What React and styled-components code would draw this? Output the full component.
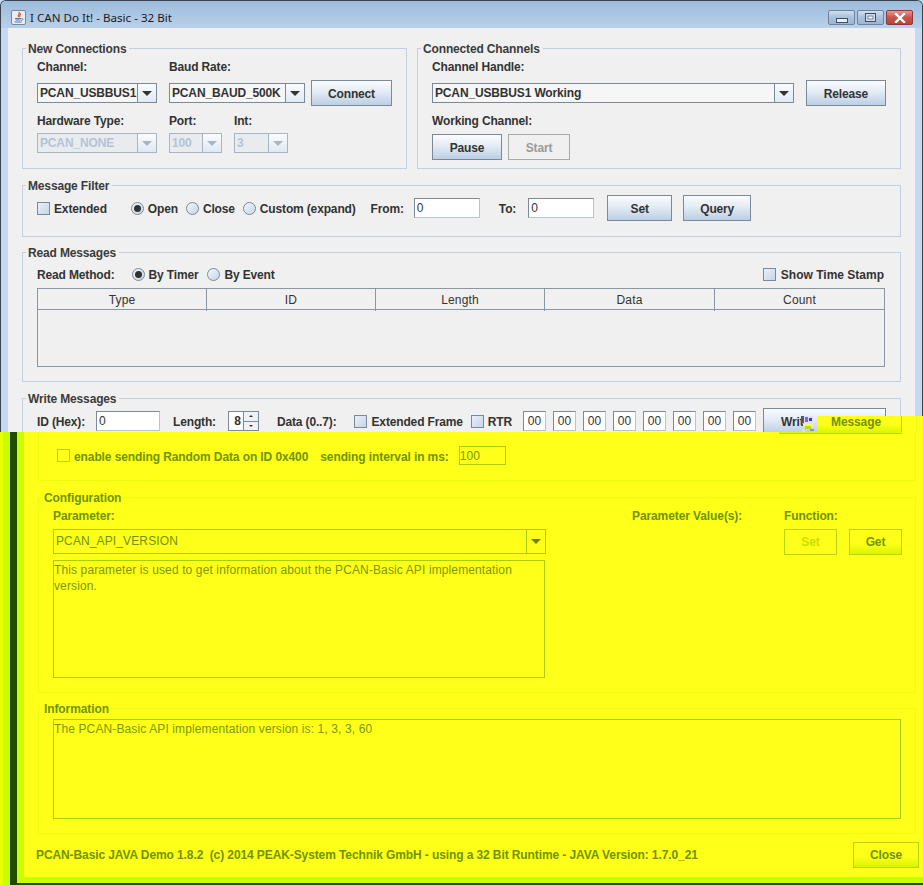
import React from 'react';
import styled, {createGlobalStyle, css} from 'styled-components';

const GlobalStyle = createGlobalStyle`
  html, body {
    margin: 0;
    padding: 0;
    background: #c5d9f1;
  }
  * {
    box-sizing: border-box;
  }
`;

const Page = styled.div`
  position: relative;
  width: 923px;
  height: 885px;
  overflow: hidden;
  font-family: "Liberation Sans", Arial, sans-serif;
  font-size: 12px;
  color: #333;
`;

const TopWindow = styled.div`
  height: 432px;
  background: #c5d9f1;
  border: 1px solid #39424d;
  border-bottom: 0;
  border-radius: 6px 6px 0 0;
  padding: 0 7px;
  overflow: hidden;
`;

const TitleBar = styled.div`
  height: 27px;
  margin: 0 -7px;
  padding: 6px 7px 0 10px;
  display: flex;
  align-items: center;
  gap: 4px;
  background: linear-gradient(180deg, #9dbcdd 0%, #b8d0ea 100%);
  font-family: "Noto Sans", "Liberation Sans", sans-serif;
  font-size: 11.6px;
  color: #1a1a1a;
`;

const TitleText = styled.span`
  flex: 1;
`;

const CaptionButtons = styled.div`
  display: flex;
  gap: 2px;
  margin-right: 2px;
`;

const CaptionButton = styled.div`
  width: 27px;
  height: 15px;
  display: flex;
  align-items: center;
  justify-content: center;
  border: 1px solid ${props => (props.$close ? '#8b3a38' : '#6f8299')};
  border-radius: 2px;
  background: ${props => (props.$close
    ? 'linear-gradient(180deg, #e09a90 0%, #c9554a 50%, #b8443a 100%)'
    : 'linear-gradient(180deg, #cfdff0 0%, #a9c1da 50%, #9db6d1 100%)')};
`;

const Content = styled.div`
  height: 404px;
  background: #f0f0f0;
  padding: 13px 14px 0;
`;

const GroupRow = styled.div`
  display: flex;
  gap: 10px;
`;

const Group = styled.fieldset`
  margin: 0 0 ${props => props.$bottom || '0'};
  padding: 0 14px;
  min-width: 0;
  flex: ${props => props.$flex || 'none'};
  width: ${props => props.$width || 'auto'};
  height: ${props => props.$height};
  border: 1px solid #c2cfdf;
  border-radius: 0;
`;

const Legend = styled.legend`
  margin-left: -11px;
  padding: 0 3px 0 2px;
  font-weight: bold;
  letter-spacing: -0.15px;
  line-height: 14px;
  color: #3b3b3b;
  transform: translateY(1px);
`;

const FieldLabel = styled.label`
  display: block;
  flex: none;
  width: ${props => props.$width || 'auto'};
  font-weight: bold;
  letter-spacing: -0.15px;
  line-height: 14px;
  white-space: nowrap;
`;

const Combo = styled.div`
  display: flex;
  align-items: stretch;
  flex: none;
  width: ${props => props.$width};
  height: 20px;
  margin-left: ${props => props.$left || '0'};
  border: 1px solid ${props => (props.$disabled ? '#a9b5c3' : '#7a8a99')};
  background: ${props => (props.$disabled ? '#e9ecef' : '#f6f6f6')};
`;

const ComboValue = styled.div`
  flex: 1;
  padding-left: 2px;
  line-height: 19px;
  font-weight: bold;
  letter-spacing: -0.15px;
  white-space: nowrap;
  overflow: hidden;
  color: ${props => (props.$disabled ? '#b4c3d6' : '#333')};
`;

const ComboArrow = styled.div`
  width: 19px;
  flex: none;
  display: flex;
  align-items: center;
  justify-content: center;
  border-left: 1px solid ${props => (props.$disabled ? '#a9b5c3' : '#7a8a99')};
  background: linear-gradient(180deg, #fbfcfe 0%, #dfe8f3 100%);
  &::after {
    content: "";
    border-left: 5px solid transparent;
    border-right: 5px solid transparent;
    border-top: 5px solid ${props => (props.$disabled ? '#a9b5c3' : '#333')};
  }
`;

const Button = styled.button`
  flex: none;
  width: ${props => props.$width};
  height: 26px;
  margin: 0 0 0 ${props => props.$left || '0'};
  padding: 2px 0 0;
  font: bold 12px "Liberation Sans", Arial, sans-serif;
  letter-spacing: -0.15px;
  color: ${props => (props.disabled ? '#9a9a9a' : '#333')};
  border: 1px solid ${props => (props.disabled ? '#a9a9a9' : '#7a8a99')};
  background: ${props => (props.disabled
    ? '#f0f0f0'
    : 'linear-gradient(180deg, #fbfcfe 0%, #e3ebf5 45%, #bccfe5 100%)')};
`;

const WriteButton = styled(Button)`
  text-align: left;
  padding-left: 17px;
`;

const Spacer = styled.div`
  flex: 1;
`;

const Row = styled.div`
  display: flex;
  align-items: ${props => props.$align || 'center'};
  height: ${props => props.$height || 'auto'};
  margin-top: ${props => props.$top || '0'};
  gap: ${props => props.$gap || '0'};
`;

const Check = styled.span`
  display: inline-block;
  flex: none;
  width: 13px;
  height: 13px;
  margin-left: ${props => props.$left || '0'};
  margin-right: ${props => props.$right || '4px'};
  border: 1px solid #7a8a99;
  background: linear-gradient(135deg, #e9eff7 0%, #c5d5e8 100%);
`;

const Radio = styled.span`
  position: relative;
  display: inline-block;
  flex: none;
  width: 13px;
  height: 13px;
  margin-left: ${props => props.$left || '0'};
  margin-right: 4px;
  border: 1px solid #7a8a99;
  border-radius: 50%;
  background: linear-gradient(135deg, #f4f7fb 0%, #c5d5e8 100%);
  ${props => props.$on && css`
    &::after {
      content: "";
      position: absolute;
      left: 2px;
      top: 2px;
      width: 7px;
      height: 7px;
      border-radius: 50%;
      background: #333;
    }
  `}
`;

const BoldText = styled.span`
  flex: none;
  padding-top: 2px;
  font-weight: bold;
  letter-spacing: ${props => props.$spacing || '-0.15px'};
  white-space: nowrap;
  margin-left: ${props => props.$left || '0'};
  margin-right: ${props => props.$right || '0'};
`;

const TextBox = styled.div`
  flex: none;
  width: ${props => props.$width};
  height: 20px;
  margin-left: ${props => props.$left || '0'};
  padding-left: ${props => (props.$center ? '0' : '2px')};
  line-height: 19px;
  letter-spacing: 0.16px;
  background: #fff;
  border: 1px solid #7a8a99;
  border-right-color: #b8c4d2;
  border-bottom-color: #b8c4d2;
  text-align: ${props => (props.$center ? 'center' : 'left')};
`;

const TableBox = styled.div`
  height: 79px;
  margin-top: 7px;
  margin-right: 1px;
  border: 1px solid #8a96a3;
`;

const TableHead = styled.div`
  display: grid;
  grid-template-columns: 169px 169px 169px 170px 1fr;
  height: 21px;
  border-bottom: 1px solid #8a96a3;
  background: #f0f0f0;
`;

const HeadCell = styled.div`
  text-align: center;
  padding-top: 1px;
  line-height: 21px;
  letter-spacing: 0.16px;
  border-right: 1px solid #8a96a3;
  &:last-child {
    border-right: 0;
  }
`;

const Spinner = styled.div`
  display: flex;
  flex: none;
  width: 31px;
  height: 20px;
  margin-left: 12px;
  background: #fff;
  border: 1px solid #7a8a99;
`;

const SpinnerValue = styled.div`
  flex: 1;
  text-align: right;
  padding-right: 2px;
  line-height: 19px;
  font-weight: bold;
`;

const SpinnerArrows = styled.div`
  width: 15px;
  display: flex;
  flex-direction: column;
  border-left: 1px solid #7a8a99;
  background: #eef2f7;
`;

const SpinnerArrow = styled.div`
  flex: 1;
  display: flex;
  align-items: center;
  justify-content: center;
  & + & {
    border-top: 1px solid #7a8a99;
  }
  &::after {
    content: "";
    border-left: 2px solid transparent;
    border-right: 2px solid transparent;
    ${props => (props.$down ? 'border-top: 2px solid #333;' : 'border-bottom: 2px solid #333;')}
  }
`;

const ByteBoxes = styled.div`
  display: flex;
  gap: 7px;
  margin-left: 11px;
`;

const Bottom = styled.div`
  height: 453px;
  background: #ffff1a;
  border-left: 3px solid #e8ff00;
  display: flex;
  color: #6f9400;
  font-weight: bold;
  letter-spacing: -0.1px;
`;

const BottomFrame = styled.div`
  flex: none;
  width: 7px;
  background: #c8ff00;
`;

const BottomDark = styled.div`
  flex: none;
  width: 7px;
  background: #1f4a00;
`;

const BottomInner = styled.div`
  flex: 1;
  min-width: 0;
  display: flex;
  flex-direction: column;
  height: 100%;
  border-bottom: 2px solid #1f4a00;
  background:
    linear-gradient(0deg, #c8ff00 0, #c8ff00 6px, transparent 6px),
    linear-gradient(90deg, #c8ff00 0, #c8ff00 7px, transparent 7px);
`;

const YellowBody = styled.div`
  flex: 1;
  padding: 0 7px 0 21px;
  display: flex;
  flex-direction: column;
`;

const YellowGroup = styled.fieldset`
  flex: none;
  margin: 0 0 ${props => props.$bottom || '0'};
  padding: 0 14px;
  min-width: 0;
  height: ${props => props.$height};
  border: 1px solid #eaff10;
  ${props => props.$open && css`
    border-top: 0;
  `}
`;

const YellowLegend = styled.legend`
  margin-left: -11px;
  padding: 0 3px 0 2px;
  line-height: 14px;
  transform: translateY(1px);
`;

const YellowCheck = styled.span`
  flex: none;
  width: 13px;
  height: 13px;
  margin-left: 4px;
  margin-right: 4px;
  border: 1px solid #b6d800;
`;

const YellowText = styled.span`
  flex: none;
  padding-top: 2px;
  white-space: nowrap;
  margin-left: ${props => props.$left || '0'};
`;

const YellowBox = styled.div`
  flex: none;
  width: ${props => props.$width};
  height: ${props => props.$height};
  margin-top: ${props => props.$top || '0'};
  margin-left: ${props => props.$left || '0'};
  padding-top: 1px;
  border: 1px solid #a8cf00;
  font-weight: normal;
  letter-spacing: 0.12px;
  line-height: 16px;
  color: #7a9a00;
`;

const YellowButton = styled.div`
  flex: none;
  width: ${props => props.$width};
  height: 26px;
  line-height: 25px;
  margin-left: ${props => props.$left || '0'};
  text-align: center;
  border: 1px solid #b6d800;
  color: ${props => (props.$faint ? '#c9e000' : '#6f9400')};
  background: ${props => (props.$faint ? 'transparent' : 'linear-gradient(180deg, #ffff1a 55%, #d8f500 100%)')};
`;

const CloseButton = styled(YellowButton)`
  margin-right: -3px;
`;

const YellowCombo = styled.div`
  display: flex;
  flex: none;
  width: 493px;
  height: 25px;
  border: 1px solid #a8cf00;
`;

const YellowComboValue = styled.div`
  flex: 1;
  padding-left: 2px;
  line-height: 23px;
  font-weight: normal;
  letter-spacing: 0.12px;
`;

const YellowComboArrow = styled.div`
  width: 19px;
  display: flex;
  align-items: center;
  justify-content: center;
  border-left: 1px solid #a8cf00;
  &::after {
    content: "";
    border-left: 5px solid transparent;
    border-right: 5px solid transparent;
    border-top: 5px solid #6f8000;
  }
`;

const ConfigLabels = styled.div`
  display: flex;
  height: 14px;
  margin-top: 5px;
  line-height: 14px;
`;

const ConfigLabel = styled.span`
  flex: none;
  width: ${props => props.$width || 'auto'};
`;

const Footer = styled.div`
  display: flex;
  align-items: center;
  height: 26px;
  margin-top: 8px;
  margin-left: -2px;
  white-space: pre;
`;

// the yellow layer pokes up over the right half of the Write button
const MessagePatch = styled.div`
  position: absolute;
  left: 817px;
  top: 416px;
  width: 106px;
  height: 16px;
  background: #ffff1a;
  &::after {
    content: "";
    position: absolute;
    left: 99px;
    top: 0;
    width: 1px;
    height: 100%;
    background: #eaff10;
  }
`;

const MessageFace = styled.div`
  width: 85px;
  height: 100%;
  padding-left: 14px;
  line-height: 12px;
  font-weight: bold;
  letter-spacing: -0.1px;
  color: #6f9400;
  border-right: 1px solid #b6d800;
  background: linear-gradient(180deg, #ffff1a 50%, #dcf800 100%);
`;

const MessageEdge = styled.div`
  position: absolute;
  left: 779px;
  top: 432px;
  width: 123px;
  height: 2px;
  background: #dcf800;
  border-bottom: 1px solid #b6d800;
`;

const Glitch = styled.svg`
  position: absolute;
  left: 800px;
  top: 416px;
`;

const MinIcon = () => (
  <svg width="12" height="11" viewBox="0 0 12 11"><rect x="0.5" y="6.5" width="11" height="4" fill="#e6eef7" stroke="#3e4f63"/></svg>
);

const MaxIcon = () => (
  <svg width="11" height="9" viewBox="0 0 11 9"><rect x="0.5" y="0.5" width="10" height="8" fill="#cfdced" stroke="#3e4f63"/><rect x="3" y="3" width="5" height="3" fill="#eef3f9" stroke="#3e4f63" strokeWidth="0.6"/></svg>
);

const CloseIcon = () => (
  <svg width="12" height="10" viewBox="0 0 12 10"><path d="M2 1 L10 9 M10 1 L2 9" stroke="#fff" strokeWidth="2.4" strokeLinecap="square"/></svg>
);

const JavaIcon = () => (
  <svg width="15" height="15" viewBox="0 0 15 15">
    <rect x="0.5" y="0.5" width="14" height="14" rx="1.5" fill="#e9edf2" stroke="#7c8794"/>
    <path d="M8 2 C9.5 4 6 5 7.5 7 M9.8 3.5 C9 5 8 5.5 9 7" fill="none" stroke="#d0421b" strokeWidth="1.1"/>
    <path d="M4 8.5 H10 M4.5 10 H9.5 M3.5 12 H10.5 M10.5 8.5 C12.5 8.5 12 10.5 10 10.5" fill="none" stroke="#3f6ba3" strokeWidth="0.9"/>
  </svg>
);

const GlitchMark = () => (
  <Glitch width="18" height="18" viewBox="0 0 18 18">
    <rect x="1" y="0" width="3" height="7" fill="#5a5560"/>
    <rect x="4" y="0" width="9" height="8" fill="#dfe2f7"/>
    <rect x="5" y="1" width="3" height="5" fill="#7a6ae8"/>
    <rect x="9" y="2" width="3" height="3" fill="#3a36e0"/>
    <rect x="3" y="8" width="10" height="3" fill="#eef48a"/>
    <rect x="5" y="10" width="6" height="3" fill="#c4d800"/>
    <rect x="2" y="13" width="3" height="3" fill="#d7dcf4"/>
    <rect x="10" y="13" width="4" height="2" fill="#8d8ad8"/>
  </Glitch>
);

const ComboBox = ({value, width, left, disabled}) => (
  <Combo $width={width} $left={left} $disabled={disabled}>
    <ComboValue $disabled={disabled}>{value}</ComboValue>
    <ComboArrow $disabled={disabled}/>
  </Combo>
);

const columns = ['Type', 'ID', 'Length', 'Data', 'Count'];
const bytes = ['00', '00', '00', '00', '00', '00', '00', '00'];

// top part of the window, the yellow part below is the highlighted bit
const App = () => (
  <Page>
    <GlobalStyle/>
    <TopWindow>
      <TitleBar>
        <JavaIcon/>
        <TitleText>I CAN Do It! - Basic - 32 Bit</TitleText>
        <CaptionButtons>
          <CaptionButton><MinIcon/></CaptionButton>
          <CaptionButton><MaxIcon/></CaptionButton>
          <CaptionButton $close><CloseIcon/></CaptionButton>
        </CaptionButtons>
      </TitleBar>
      <Content>
        <GroupRow>
          <Group $width="385px" $height="128px" $bottom="9px">
            <Legend>New Connections</Legend>
            <Row $top="5px" $height="14px">
              <FieldLabel $width="132px">Channel:</FieldLabel>
              <FieldLabel>Baud Rate:</FieldLabel>
            </Row>
            <Row $top="6px" $height="26px">
              <ComboBox value="PCAN_USBBUS1" width="120px"/>
              <ComboBox value="PCAN_BAUD_500K" width="136px" left="12px"/>
              <Button $width="81px" $left="6px">Connect</Button>
            </Row>
            <Row $top="8px" $height="14px">
              <FieldLabel $width="132px">Hardware Type:</FieldLabel>
              <FieldLabel $width="65px">Port:</FieldLabel>
              <FieldLabel>Int:</FieldLabel>
            </Row>
            <Row $top="5px">
              <ComboBox value="PCAN_NONE" width="120px" disabled/>
              <ComboBox value="100" width="53px" left="12px" disabled/>
              <ComboBox value="3" width="54px" left="12px" disabled/>
            </Row>
          </Group>
          <Group $flex="1" $height="128px" $bottom="9px">
            <Legend>Connected Channels</Legend>
            <Row $top="5px" $height="14px">
              <FieldLabel>Channel Handle:</FieldLabel>
            </Row>
            <Row $top="6px" $height="26px">
              <ComboBox value="PCAN_USBBUS1 Working" width="362px"/>
              <Button $width="80px" $left="12px">Release</Button>
            </Row>
            <Row $top="8px" $height="14px">
              <FieldLabel>Working Channel:</FieldLabel>
            </Row>
            <Row $top="6px" $gap="6px">
              <Button $width="70px">Pause</Button>
              <Button $width="62px" disabled>Start</Button>
            </Row>
          </Group>
        </GroupRow>
        <Group $height="59px" $bottom="8px">
          <Legend>Message Filter</Legend>
          <Row $height="26px" $top="3px">
            <Check/>
            <BoldText>Extended</BoldText>
            <Radio $on $left="24px"/>
            <BoldText>Open</BoldText>
            <Radio $left="8px"/>
            <BoldText>Close</BoldText>
            <Radio $left="8px"/>
            <BoldText>Custom (expand)</BoldText>
            <BoldText $left="15px">From:</BoldText>
            <TextBox $width="66px" $left="10px">0</TextBox>
            <BoldText $left="19px">To:</BoldText>
            <TextBox $width="66px" $left="12px">0</TextBox>
            <Button $width="65px" $left="13px">Set</Button>
            <Button $width="68px" $left="11px">Query</Button>
          </Row>
        </Group>
        <Group $height="137px" $bottom="9px">
          <Legend>Read Messages</Legend>
          <Row $height="14px" $top="8px">
            <BoldText>Read Method:</BoldText>
            <Radio $on $left="17px"/>
            <BoldText>By Timer</BoldText>
            <Radio $left="9px"/>
            <BoldText>By Event</BoldText>
            <Spacer/>
            <Check $right="5px"/>
            <BoldText $right="2px" $spacing="0">Show Time Stamp</BoldText>
          </Row>
          <TableBox>
            <TableHead>
              {columns.map(name => <HeadCell key={name}>{name}</HeadCell>)}
            </TableHead>
          </TableBox>
        </Group>
        <Group $height="60px">
          <Legend>Write Messages</Legend>
          <Row $height="26px" $top="3px">
            <BoldText>ID (Hex):</BoldText>
            <TextBox $width="64px" $left="11px">0</TextBox>
            <BoldText $left="13px">Length:</BoldText>
            <Spinner>
              <SpinnerValue>8</SpinnerValue>
              <SpinnerArrows>
                <SpinnerArrow/>
                <SpinnerArrow $down/>
              </SpinnerArrows>
            </Spinner>
            <BoldText $left="18px">Data (0..7):</BoldText>
            <Check $left="17px" $right="5px"/>
            <BoldText>Extended Frame</BoldText>
            <Check $left="8px"/>
            <BoldText>RTR</BoldText>
            <ByteBoxes>
              {bytes.map((b, i) => <TextBox key={i} $width="23px" $center>{b}</TextBox>)}
            </ByteBoxes>
            <WriteButton $width="123px" $left="7px">Write</WriteButton>
          </Row>
        </Group>
      </Content>
    </TopWindow>
    <Bottom>
      <BottomFrame/>
      <BottomDark/>
      <BottomInner>
        <YellowBody>
          <YellowGroup $open $height="49px" $bottom="9px">
            <Row $height="19px" $top="14px">
              <YellowCheck/>
              <YellowText>enable sending Random Data on ID 0x400</YellowText>
              <YellowText $left="12px">sending interval in ms:</YellowText>
              <YellowBox $width="47px" $height="19px" $left="10px">100</YellowBox>
            </Row>
          </YellowGroup>
          <YellowGroup $height="203px" $bottom="8px">
            <YellowLegend>Configuration</YellowLegend>
            <ConfigLabels>
              <ConfigLabel $width="579px">Parameter:</ConfigLabel>
              <ConfigLabel $width="152px">Parameter Value(s):</ConfigLabel>
              <ConfigLabel>Function:</ConfigLabel>
            </ConfigLabels>
            <Row $top="6px" $align="flex-start">
              <YellowCombo>
                <YellowComboValue>PCAN_API_VERSION</YellowComboValue>
                <YellowComboArrow/>
              </YellowCombo>
              <YellowButton $width="53px" $left="238px" $faint>Set</YellowButton>
              <YellowButton $width="53px" $left="12px">Get</YellowButton>
            </Row>
            <YellowBox $width="492px" $height="118px" $top="5px">
              This parameter is used to get information about the PCAN-Basic API implementation<br/>version.
            </YellowBox>
          </YellowGroup>
          <YellowGroup $height="133px">
            <YellowLegend>Information</YellowLegend>
            <YellowBox $width="848px" $height="100px" $top="4px">
              The PCAN-Basic API implementation version is: 1, 3, 3, 60
            </YellowBox>
          </YellowGroup>
          <Footer>
            <span>PCAN-Basic JAVA Demo 1.8.2  (c) 2014 PEAK-System Technik GmbH - using a 32 Bit Runtime - JAVA Version: 1.7.0_21</span>
            <Spacer/>
            <CloseButton $width="66px">Close</CloseButton>
          </Footer>
        </YellowBody>
      </BottomInner>
    </Bottom>
    <MessagePatch><MessageFace>Message</MessageFace></MessagePatch>
    <MessageEdge/>
    <GlitchMark/>
  </Page>
);

export default App;
